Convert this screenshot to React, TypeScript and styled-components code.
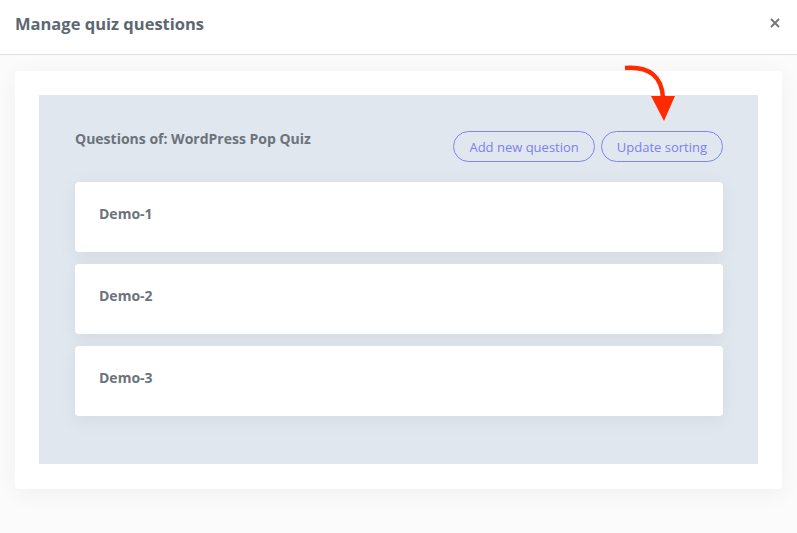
import React from "react";
import styled, { createGlobalStyle } from "styled-components";

const GlobalStyle = createGlobalStyle`
  html, body {
    margin: 0;
    padding: 0;
    background: #fbfbfb;
    font-family: "Open Sans", "Lato", sans-serif;
  }
`;

const Modal = styled.div`
  width: 797px;
  height: 533px;
  background: #fbfbfb;
  display: flex;
  flex-direction: column;
`;

const Header = styled.div`
  height: 55px;
  box-sizing: border-box;
  display: flex;
  align-items: center;
  justify-content: space-between;
  padding: 0 15px 0 15px;
  background: #fff;
  border-bottom: 1px solid #dcdfe5;
`;

const Title = styled.h1`
  margin: 0 0 7px 0;
  font-size: 16.5px;
  font-weight: 700;
  color: #5e6771;
`;

const Close = styled.button`
  border: 0;
  background: none;
  padding: 0;
  margin: 0 0 8px 0;
  width: 14px;
  height: 14px;
  display: flex;
  align-items: center;
  justify-content: center;
  cursor: pointer;
`;

const Body = styled.div`
  position: relative;
  padding: 16px 15px 0 15px;
`;

const Card = styled.div`
  background: #fff;
  border-radius: 4px;
  padding: 24px 24px 25px 24px;
  box-shadow: 0 4px 24px rgba(0, 0, 0, 0.05);
`;

const Panel = styled.div`
  background: #e1e7ee;
  padding: 36px 35px 48px 36px;
  display: flex;
  flex-direction: column;
`;

const PanelHead = styled.div`
  display: flex;
  justify-content: space-between;
  align-items: flex-start;
  margin-bottom: 20px;
`;

const PanelTitle = styled.div`
  font-size: 14px;
  font-weight: 700;
  color: #6b737c;
  line-height: 16px;
`;

const Actions = styled.div`
  display: flex;
  gap: 6px;
`;

const Pill = styled.button`
  height: 31px;
  box-sizing: border-box;
  padding: 0 15px;
  border: 1px solid #7f86f2;
  border-radius: 16px;
  background: transparent;
  color: #7a81ee;
  font-family: inherit;
  font-size: 13px;
  cursor: pointer;
`;

const List = styled.div`
  display: flex;
  flex-direction: column;
  gap: 12px;
`;

const Item = styled.div`
  height: 70px;
  box-sizing: border-box;
  background: #fff;
  border-radius: 4px;
  padding: 0 24px 8px 24px;
  display: flex;
  align-items: center;
  font-size: 14px;
  font-weight: 700;
  color: #6b737c;
  box-shadow: 0 4px 16px rgba(120, 135, 160, 0.12);
`;

const Arrow = styled.svg`
  position: absolute;
  left: 620px;
  top: 10px;
`;

const questions = ["Demo-1", "Demo-2", "Demo-3"];

const App: React.FC = () => {
  return (
    <>
      <GlobalStyle />
      <Modal>
        <Header>
          <Title>Manage quiz questions</Title>
          <Close aria-label="Close">
            <svg width="10" height="10" viewBox="0 0 10 10">
              <path d="M1 1 L9 9 M9 1 L1 9" stroke="#777" strokeWidth="2" />
            </svg>
          </Close>
        </Header>
        <Body>
          <Card>
            <Panel>
              <PanelHead>
                <PanelTitle>Questions of: WordPress Pop Quiz</PanelTitle>
                <Actions>
                  <Pill>Add new question</Pill>
                  <Pill>Update sorting</Pill>
                </Actions>
              </PanelHead>
              <List>
                {questions.map((q) => (
                  <Item key={q}>{q}</Item>
                ))}
              </List>
            </Panel>
          </Card>
          {/* pointer to the sorting button */}
          <Arrow width="60" height="60" viewBox="0 0 60 60">
            <path
              d="M5 3 C 30 1, 42 12, 43 33"
              fill="none"
              stroke="#ff2a00"
              strokeWidth="4.5"
            />
            <path d="M31 31 L55 31 L44 56 Z" fill="#ff2a00" />
          </Arrow>
        </Body>
      </Modal>
    </>
  );
};

export default App;
